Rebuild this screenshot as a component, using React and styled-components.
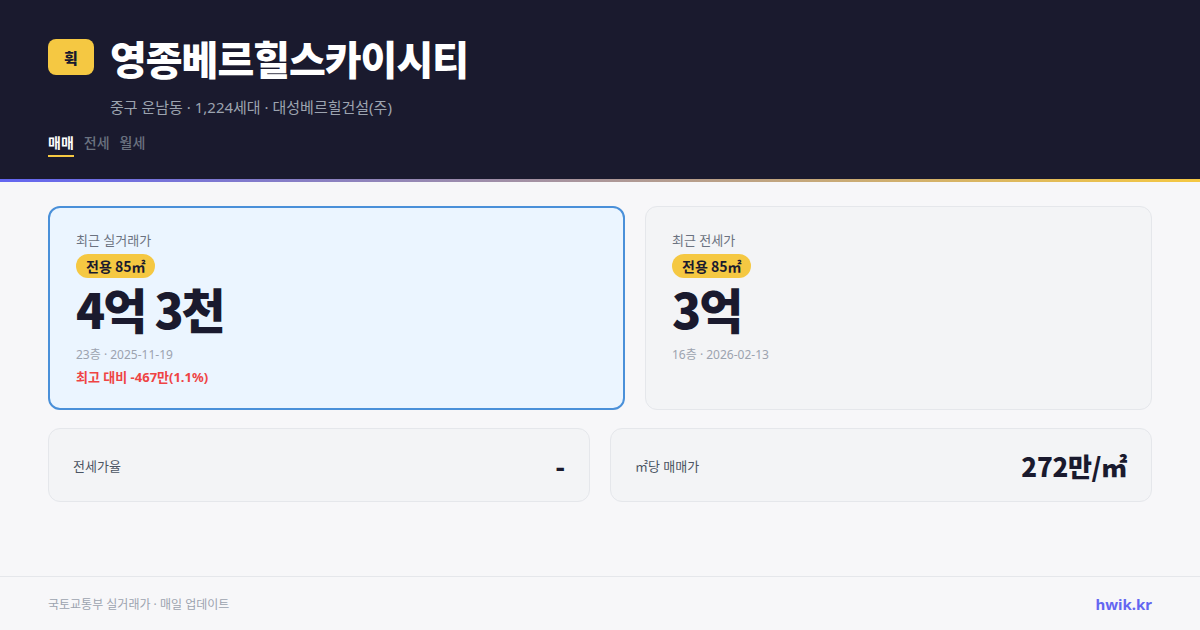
import React from 'react';
import styled, { createGlobalStyle } from 'styled-components';

const GlobalStyle = createGlobalStyle`
	* {
		box-sizing: border-box;
	}

	body {
		margin: 0;
		background: #f7f7f9;
		font-family: 'Noto Sans', 'Noto Sans CJK KR', sans-serif;
	}
`;

const Page = styled.div`
	display: flex;
	flex-direction: column;
	width: 1200px;
	height: 630px;
	background: #f7f7f9;
`;

const Header = styled.header`
	height: 182px;
	padding: 36px 48px 0;
	background: #1a1a2e;
	border-bottom: 3px solid transparent;
	border-image: linear-gradient(90deg, #6366f1, #f5c842) 1;
`;

const TitleRow = styled.div`
	display: flex;
	align-items: flex-start;
	gap: 16px;
`;

const LogoBadge = styled.div`
	display: flex;
	align-items: center;
	justify-content: center;
	width: 46px;
	height: 36px;
	margin-top: 3px;
	border-radius: 8px;
	background: #f5c842;
	color: #1a1a2e;
	font-size: 15px;
	font-weight: 800;
`;

const TitleBlock = styled.div`
	display: flex;
	flex-direction: column;
`;

const Title = styled.h1`
	margin: 0;
	color: #ffffff;
	font-family: 'Noto Sans CJK KR', sans-serif;
	font-size: 40px;
	font-weight: 900;
	line-height: 44px;
	letter-spacing: -1px;
`;

const Subtitle = styled.p`
	margin: 16px 0 0;
	color: #9ca3af;
	font-size: 15px;
	line-height: 22px;
`;

const Tabs = styled.nav`
	display: flex;
	gap: 10px;
	margin-top: 15px;
`;

const Tab = styled.span`
	padding-bottom: 2px;
	border-bottom: 2px solid ${({ $active }) => ($active ? '#f5c842' : 'transparent')};
	color: ${({ $active }) => ($active ? '#ffffff' : '#6b7280')};
	font-size: 14px;
	font-weight: ${({ $active }) => ($active ? 700 : 500)};
	line-height: 20px;
`;

const Main = styled.main`
	display: flex;
	flex: 1;
	flex-direction: column;
	gap: 18px;
	padding: 24px 48px 0;
`;

const PriceRow = styled.div`
	display: grid;
	grid-template-columns: 577fr 507fr;
	gap: 20px;
`;

const PriceCard = styled.section`
	display: flex;
	flex-direction: column;
	align-items: flex-start;
	height: 204px;
	padding: ${({ $highlight }) => ($highlight ? '23px 26px' : '24px 26px')};
	border: ${({ $highlight }) => ($highlight ? '2px solid #4a90d9' : '1px solid #e5e7eb')};
	border-radius: 12px;
	background: ${({ $highlight }) => ($highlight ? '#ebf5ff' : '#f3f4f6')};
`;

const CardLabel = styled.div`
	color: #6b7280;
	font-size: 13px;
	line-height: 18px;
`;

const AreaBadge = styled.span`
	margin-top: 5px;
	padding: 1px 10px;
	border-radius: 12px;
	background: #f5c842;
	color: #1a1a2e;
	font-family: 'Noto Sans CJK KR', sans-serif;
	font-size: 14px;
	font-weight: 700;
	line-height: 22px;
`;

const Price = styled.div`
	margin-top: 2px;
	color: #1a1a2e;
	font-family: 'Noto Sans CJK KR', sans-serif;
	font-size: 48px;
	font-weight: 900;
	line-height: 56px;
	letter-spacing: -2px;
`;

const Meta = styled.div`
	margin-top: 10px;
	color: #9ca3af;
	font-size: 12px;
	line-height: 18px;
`;

const Change = styled.div`
	margin-top: 4px;
	color: #ef4444;
	font-size: 13px;
	font-weight: 700;
	line-height: 18px;
`;

const StatRow = styled.div`
	display: grid;
	grid-template-columns: 1fr 1fr;
	gap: 20px;
`;

const StatCard = styled.div`
	display: flex;
	align-items: center;
	justify-content: space-between;
	height: 74px;
	padding: 0 24px;
	border: 1px solid #e5e7eb;
	border-radius: 12px;
	background: #f3f4f6;
`;

const StatLabel = styled.span`
	color: #4b5563;
	font-size: 13px;
`;

const StatValue = styled.span`
	color: #1a1a2e;
	font-family: 'Noto Sans CJK KR', sans-serif;
	font-size: 26px;
	font-weight: 900;
	letter-spacing: -0.3px;
`;

const Footer = styled.footer`
	display: flex;
	align-items: center;
	justify-content: space-between;
	height: 54px;
	padding: 0 48px;
	border-top: 1px solid #e5e7eb;
`;

const Source = styled.span`
	color: #9ca3af;
	font-size: 12px;
`;

const Brand = styled.span`
	color: #6366f1;
	font-size: 15px;
	font-weight: 700;
`;

function App() {
	return (
		<Page>
			<GlobalStyle />
			<Header>
				<TitleRow>
					<LogoBadge>휙</LogoBadge>
					<TitleBlock>
						<Title>영종베르힐스카이시티</Title>
						<Subtitle>중구 운남동 · 1,224세대 · 대성베르힐건설(주)</Subtitle>
					</TitleBlock>
				</TitleRow>
				<Tabs>
					<Tab $active>매매</Tab>
					<Tab>전세</Tab>
					<Tab>월세</Tab>
				</Tabs>
			</Header>
			<Main>
				<PriceRow>
					<PriceCard $highlight>
						<CardLabel>최근 실거래가</CardLabel>
						<AreaBadge>전용 85㎡</AreaBadge>
						<Price>4억 3천</Price>
						<Meta>23층 · 2025-11-19</Meta>
						<Change>최고 대비 -467만(1.1%)</Change>
					</PriceCard>
					<PriceCard>
						<CardLabel>최근 전세가</CardLabel>
						<AreaBadge>전용 85㎡</AreaBadge>
						<Price>3억</Price>
						<Meta>16층 · 2026-02-13</Meta>
					</PriceCard>
				</PriceRow>
				<StatRow>
					<StatCard>
						<StatLabel>전세가율</StatLabel>
						<StatValue>-</StatValue>
					</StatCard>
					<StatCard>
						<StatLabel>㎡당 매매가</StatLabel>
						<StatValue>272만/㎡</StatValue>
					</StatCard>
				</StatRow>
			</Main>
			<Footer>
				<Source>국토교통부 실거래가 · 매일 업데이트</Source>
				<Brand>hwik.kr</Brand>
			</Footer>
		</Page>
	);
}

export default App;
